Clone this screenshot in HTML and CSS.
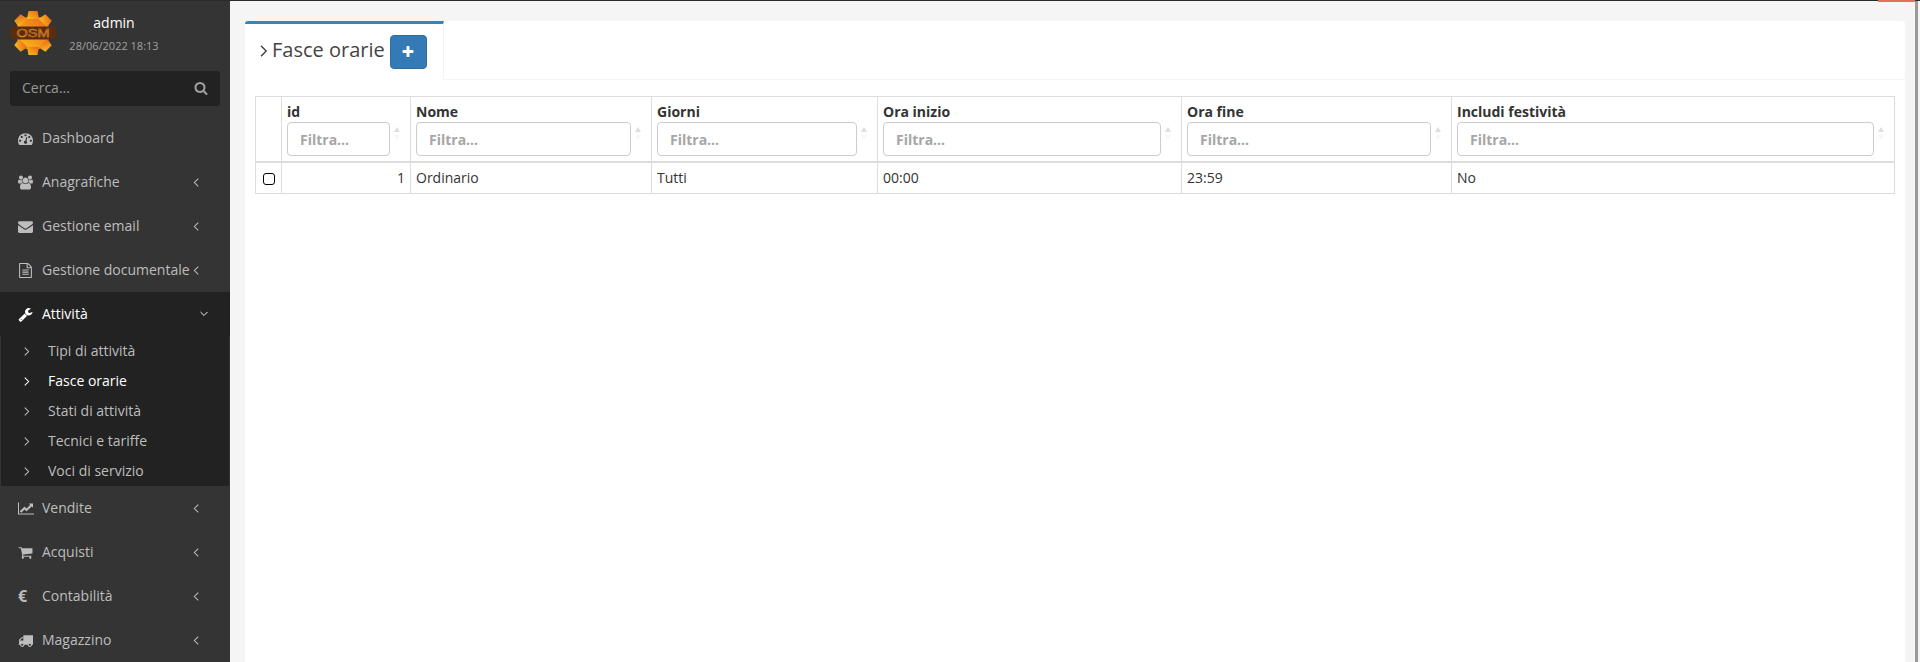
FILE: index.html
```html
<!DOCTYPE html>
<html lang="it">
<head>
<meta charset="utf-8">
<title>Fasce orarie</title>
<link rel="stylesheet" href="styles.css">
</head>
<body>
<svg class="defs" width="0" height="0" aria-hidden="true">
  <defs>
    <symbol id="i-search" viewBox="0 0 1792 1792"><path d="M1216 832q0-185-131.500-316.500t-316.500-131.500-316.500 131.500-131.500 316.500 131.500 316.500 316.500 131.500 316.500-131.500 131.500-316.500zm512 832q0 52-38 90t-90 38q-54 0-90-38l-343-342q-179 124-399 124-143 0-273.500-55.500t-225-150-150-225-55.500-273.500 55.500-273.500 150-225 225-150 273.500-55.500 273.500 55.500 225 150 150 225 55.500 273.500q0 220-124 399l343 343q37 37 37 90z"/></symbol>
    <symbol id="i-dash" viewBox="0 0 1792 1792"><path d="M384 1152q0-53-37.500-90.500t-90.500-37.500-90.500 37.500-37.500 90.500 37.500 90.500 90.500 37.500 90.500-37.500 37.500-90.500zm192-448q0-53-37.500-90.500t-90.500-37.500-90.500 37.500-37.500 90.500 37.500 90.500 90.500 37.500 90.500-37.500 37.500-90.500zm428 481l101-382q6-26-7.500-48.500t-38.500-29.500-48 6.500-30 39.500l-101 382q-60 5-107 43.500t-63 98.500q-20 77 20 146t117 89 146-20 89-117q16-60-6-117t-72-91zm660-33q0-53-37.500-90.500t-90.500-37.500-90.500 37.500-37.500 90.500 37.500 90.500 90.500 37.500 90.500-37.500 37.500-90.500zm-640-640q0-53-37.500-90.500t-90.500-37.500-90.500 37.500-37.500 90.500 37.500 90.500 90.500 37.500 90.500-37.500 37.500-90.500zm448 192q0-53-37.500-90.500t-90.500-37.500-90.500 37.500-37.500 90.500 37.500 90.500 90.500 37.500 90.500-37.500 37.500-90.500zm320 448q0 261-141 483-19 29-54 29h-1402q-35 0-54-29-141-221-141-483 0-182 71-348t191-286 286-191 348-71 348 71 286 191 191 286 71 348z"/></symbol>
    <symbol id="i-users" viewBox="0 0 1920 1792"><path d="M593 896q-162 5-265 128h-134q-82 0-138-40.500t-56-118.500q0-353 124-353 6 0 43.500 21t97.500 42.500 119 21.500q67 0 133-23-5 37-5 66 0 139 81 256zm1071 637q0 120-73 189.500t-194 69.500h-874q-121 0-194-69.500t-73-189.500q0-53 3.500-103.500t14-109 26.500-108.500 43-97.500 62-81 85.500-53.500 111.500-20q10 0 43 21.500t73 48 107 48 135 21.500 135-21.500 107-48 73-48 43-21.500q61 0 111.500 20t85.500 53.500 62 81 43 97.500 26.500 108.500 14 109 3.500 103.500zm-1024-1277q0 106-75 181t-181 75-181-75-75-181 75-181 181-75 181 75 75 181zm704 384q0 159-112.500 271.500t-271.500 112.500-271.500-112.500-112.500-271.500 112.500-271.500 271.500-112.500 271.500 112.500 112.500 271.500zm576 225q0 78-56 118.500t-138 40.500h-134q-103-123-265-128 81-117 81-256 0-29-5-66 66 23 133 23 59 0 119-21.500t97.500-42.500 43.500-21q124 0 124 353zm-128-609q0 106-75 181t-181 75-181-75-75-181 75-181 181-75 181 75 75 181z"/></symbol>
    <symbol id="i-mail" viewBox="0 0 1792 1792"><path d="M1792 710v794q0 66-47 113t-113 47h-1472q-66 0-113-47t-47-113v-794q44 49 101 87 362 246 497 345 57 42 92.500 65.500t94.500 48 110 24.500h2q51 0 110-24.500t94.500-48 92.500-65.500q170-123 498-345 57-39 100-87zm0-294q0 79-49 151t-122 123q-376 261-468 325-10 7-42.500 30.500t-54 38-52 32.500-57.500 27-50 9h-2q-23 0-50-9t-57.500-27-52-32.500-54-38-42.500-30.500q-91-64-262-182.500t-205-142.500q-62-42-117-115.500t-55-136.500q0-78 41.500-130t118.500-52h1472q65 0 112.500 47t47.500 113z"/></symbol>
    <symbol id="i-file" viewBox="0 0 1792 1792"><path d="M1596 380q28 28 48 76t20 88v1152q0 40-28 68t-68 28h-1344q-40 0-68-28t-28-68v-1600q0-40 28-68t68-28h896q40 0 88 20t76 48zm-444-244v376h376q-10-29-22-41l-313-313q-12-12-41-22zm384 1528v-1024h-416q-40 0-68-28t-28-68v-416h-768v1536h1280zm-1024-864q0-14 9-23t23-9h704q14 0 23 9t9 23v64q0 14-9 23t-23 9h-704q-14 0-23-9t-9-23v-64zm736 224q14 0 23 9t9 23v64q0 14-9 23t-23 9h-704q-14 0-23-9t-9-23v-64q0-14 9-23t23-9h704zm0 256q14 0 23 9t9 23v64q0 14-9 23t-23 9h-704q-14 0-23-9t-9-23v-64q0-14 9-23t23-9h704z"/></symbol>
    <symbol id="i-wrench" viewBox="0 0 1792 1792"><path d="M448 1472q0-26-19-45t-45-19-45 19-19 45 19 45 45 19 45-19 19-45zm644-420l-682 682q-37 37-90 37-52 0-91-37l-106-108q-38-36-38-90 0-53 38-91l681-681q39 98 114.500 173.500t173.500 114.500zm634-435q0 39-23 106-47 134-164.500 217.500t-258.500 83.500q-185 0-316.500-131.500t-131.500-316.500 131.500-316.500 316.500-131.500q58 0 121.500 16.500t107.500 46.500q16 11 16 28t-16 28l-293 169v224l193 107q5-3 79-48.500t135.500-81 70.500-35.500q15 0 23.500 10t8.500 25z"/></symbol>
    <symbol id="i-chart" viewBox="0 0 2048 1792"><path d="M2048 1536v128h-2048v-1536h128v1408h1920zm-128-1248v435q0 21-19.500 30.500t-35.500-7.500l-121-121-633 633q-10 10-23 10t-23-10l-233-233-416 416-192-192 585-585q10-10 23-10t23 10l233 233 464-464-121-121q-16-16-7.500-35.500t29.500-19.500h435q14 0 23 9t9 23z"/></symbol>
    <symbol id="i-cart" viewBox="0 0 1792 1792"><path d="M704 1536q0 52-38 90t-90 38-90-38-38-90 38-90 90-38 90 38 38 90zm896 0q0 52-38 90t-90 38-90-38-38-90 38-90 90-38 90 38 38 90zm128-1088v512q0 24-16.500 42.500t-40.500 21.500l-1044 122q13 60 13 70 0 16-24 64h920q26 0 45 19t19 45-19 45-45 19h-1024q-26 0-45-19t-19-45q0-11 8-31.500t16-36 21.500-40 15.500-29.500l-177-823h-204q-26 0-45-19t-19-45 19-45 45-19h256q16 0 28.500 6.500t19.500 15.500 13 24.500 8 26 5.500 29.500 4.500 26h1201q26 0 45 19t19 45z"/></symbol>
    <symbol id="i-truck" viewBox="0 0 1792 1792"><path d="M640 1408q0-52-38-90t-90-38-90 38-38 90 38 90 90 38 90-38 38-90zm-384-512h384v-256h-158q-13 0-22 9l-195 195q-9 9-9 22v30zm1280 512q0-52-38-90t-90-38-90 38-38 90 38 90 90 38 90-38 38-90zm256-1088v1024q0 15-4 26.500t-13.500 18.500-16.500 11.500-23.500 6-22.500 2-25.500 0-22.500-.5q0 106-75 181t-181 75-181-75-75-181h-384q0 106-75 181t-181 75-181-75-75-181h-64q-3 0-22.500.5t-25.500 0-22.500-2-23.500-6-16.500-11.500-13.500-18.500-4-26.500q0-26 19-45t45-19v-320q0-8-.5-35t0-38 2.500-34.500 6.500-37 14-30.500 22.500-30l198-198q19-19 50.500-32t58.500-13h160v-192q0-26 19-45t45-19h1024q26 0 45 19t19 45z"/></symbol>
    <symbol id="i-plus" viewBox="0 0 1792 1792"><path d="M1600 736v192q0 40-28 68t-68 28h-416v416q0 40-28 68t-68 28h-192q-40 0-68-28t-28-68v-416h-416q-40 0-68-28t-28-68v-192q0-40 28-68t68-28h416v-416q0-40 28-68t68-28h192q40 0 68 28t28 68v416h416q40 0 68 28t28 68z"/></symbol>
    <symbol id="i-left" viewBox="0 0 8 12"><path d="M7 .8 1.800 6 7 11.200" fill="none" stroke="currentColor" stroke-width="1.400"/></symbol>
    <symbol id="i-down" viewBox="0 0 12 8"><path d="M.8 1 6 6.200 11.200 1" fill="none" stroke="currentColor" stroke-width="1.400"/></symbol>
    <symbol id="i-right" viewBox="0 0 8 12"><path d="M1 .8 6.200 6 1 11.200" fill="none" stroke="currentColor" stroke-width="1.400"/></symbol>
    <linearGradient id="gear-fill" x1="0" y1="1" x2="1" y2="0">
      <stop offset="0" stop-color="#f9c114"/>
      <stop offset="1" stop-color="#ea6420"/>
    </linearGradient>
  </defs>
</svg>

<div class="topline"><span class="topline-alert"></span></div>
<div class="app">
  <aside class="sidebar">
    <div class="user-panel">
      <svg class="logo" viewBox="0 0 44 44" aria-hidden="true">
        <g fill="url(#gear-fill)">
          <circle cx="22" cy="22" r="17"/>
          <path d="M17.500 0h9l1.500 8h-12z"/>
          <path d="M17.500 44h9l1.500-8h-12z"/>
          <path d="M17.500 0h9l1.500 8h-12z" transform="rotate(45 22 22)"/>
          <path d="M17.500 44h9l1.500-8h-12z" transform="rotate(45 22 22)"/>
          <path d="M17.500 0h9l1.500 8h-12z" transform="rotate(-45 22 22)"/>
          <path d="M17.500 44h9l1.500-8h-12z" transform="rotate(-45 22 22)"/>
        </g>
        <rect x="-1" y="15.500" width="46" height="13" rx="4" fill="#5a2d10"/>
        <text x="22" y="26.200" class="logo-text" text-anchor="middle" textLength="33" lengthAdjust="spacingAndGlyphs">OSM</text>
      </svg>
      <div class="user-info">
        <div class="user-name">admin</div>
        <div class="user-date">28/06/2022 18:13</div>
      </div>
    </div>
    <form class="search">
      <input class="search-input" type="text" placeholder="Cerca...">
      <svg class="search-icon"><use href="#i-search"/></svg>
    </form>
    <nav class="menu">
      <a class="item"><svg class="ic"><use href="#i-dash"/></svg><span class="label">Dashboard</span></a>
      <a class="item"><svg class="ic"><use href="#i-users"/></svg><span class="label">Anagrafiche</span><svg class="caret"><use href="#i-left"/></svg></a>
      <a class="item"><svg class="ic"><use href="#i-mail"/></svg><span class="label">Gestione email</span><svg class="caret"><use href="#i-left"/></svg></a>
      <a class="item"><svg class="ic"><use href="#i-file"/></svg><span class="label">Gestione documentale</span><svg class="caret"><use href="#i-left"/></svg></a>
      <a class="item item-open"><svg class="ic"><use href="#i-wrench"/></svg><span class="label">Attività</span><svg class="caret-down"><use href="#i-down"/></svg></a>
      <div class="submenu">
        <a class="sub"><svg class="sub-caret"><use href="#i-right"/></svg><span>Tipi di attività</span></a>
        <a class="sub sub-active"><svg class="sub-caret"><use href="#i-right"/></svg><span>Fasce orarie</span></a>
        <a class="sub"><svg class="sub-caret"><use href="#i-right"/></svg><span>Stati di attività</span></a>
        <a class="sub"><svg class="sub-caret"><use href="#i-right"/></svg><span>Tecnici e tariffe</span></a>
        <a class="sub"><svg class="sub-caret"><use href="#i-right"/></svg><span>Voci di servizio</span></a>
      </div>
      <a class="item"><svg class="ic ic-chart"><use href="#i-chart"/></svg><span class="label">Vendite</span><svg class="caret"><use href="#i-left"/></svg></a>
      <a class="item"><svg class="ic"><use href="#i-cart"/></svg><span class="label">Acquisti</span><svg class="caret"><use href="#i-left"/></svg></a>
      <a class="item"><span class="ic ic-euro">€</span><span class="label">Contabilità</span><svg class="caret"><use href="#i-left"/></svg></a>
      <a class="item"><svg class="ic"><use href="#i-truck"/></svg><span class="label">Magazzino</span><svg class="caret"><use href="#i-left"/></svg></a>
    </nav>
  </aside>

  <main class="content">
    <section class="card">
      <header class="card-head">
        <div class="tab">
          <svg class="tab-caret"><use href="#i-right"/></svg>
          <h1 class="tab-title">Fasce orarie</h1>
          <button class="add-btn" type="button"><svg class="add-icon"><use href="#i-plus"/></svg></button>
        </div>
        <div class="tab-rest"></div>
      </header>
      <div class="card-body">
        <table class="grid">
          <colgroup>
            <col class="c-check"><col class="c-id"><col class="c-nome"><col class="c-giorni"><col class="c-inizio"><col class="c-fine"><col class="c-fest">
          </colgroup>
          <thead>
            <tr>
              <th></th>
              <th><div class="th-title">id</div><input class="filter" type="text" placeholder="Filtra..."><span class="sort"></span></th>
              <th><div class="th-title">Nome</div><input class="filter" type="text" placeholder="Filtra..."><span class="sort"></span></th>
              <th><div class="th-title">Giorni</div><input class="filter" type="text" placeholder="Filtra..."><span class="sort"></span></th>
              <th><div class="th-title">Ora inizio</div><input class="filter" type="text" placeholder="Filtra..."><span class="sort"></span></th>
              <th><div class="th-title">Ora fine</div><input class="filter" type="text" placeholder="Filtra..."><span class="sort"></span></th>
              <th><div class="th-title">Includi festività</div><input class="filter" type="text" placeholder="Filtra..."><span class="sort"></span></th>
            </tr>
          </thead>
          <tbody>
            <tr>
              <td class="td-check"><input class="row-check" type="checkbox"></td>
              <td class="td-num">1</td>
              <td>Ordinario</td>
              <td>Tutti</td>
              <td>00:00</td>
              <td>23:59</td>
              <td>No</td>
            </tr>
          </tbody>
        </table>
      </div>
    </section>
  </main>
  <div class="scrollbar"></div>
</div>
</body>
</html>
```
FILE: styles.css
```css
* { box-sizing: border-box; }
html, body { height: 100%; }
body {
  margin: 0;
  height: 662px;
  overflow: hidden;
  display: flex;
  flex-direction: column;
  background: #f5f5f5;
  color: #333;
  font-family: "Open Sans", "Liberation Sans", sans-serif;
  font-size: 14px;
  line-height: 20px;
}
.defs { position: absolute; }

.topline {
  flex: 0 0 1px;
  background: #2a2a2a;
  position: relative;
}
.topline-alert {
  position: absolute;
  top: 0;
  right: 5px;
  width: 37px;
  height: 2px;
  background: #e0705f;
}

.app { flex: 1; display: flex; min-height: 0; }

/* Sidebar */
.sidebar {
  flex: 0 0 230px;
  background: #343434;
  color: #bdbdbd;
  overflow: hidden;
}
.user-panel {
  height: 70px;
  display: flex;
  padding: 10px 0 0 11px;
}
.logo { width: 44px; height: 44px; flex: none; overflow: visible; }
.logo-text {
  font-family: "Liberation Sans", sans-serif;
  font-size: 10px;
  fill: none;
  stroke: #e8912a;
  stroke-width: 0.450px;
}
.user-info { width: 118px; text-align: center; padding-top: 2px; }
.user-name { color: #fff; font-size: 14px; line-height: 20px; }
.user-date { color: #a0a0a0; font-size: 11px; line-height: 20px; margin-top: 3px; }

.search {
  margin: 0 10px;
  height: 35px;
  background: #222;
  border-radius: 3px;
  display: flex;
  align-items: center;
  padding: 0 12px 1px;
}
.search-input {
  flex: 1;
  min-width: 0;
  border: 0;
  padding: 0;
  background: transparent;
  color: #999;
  font: inherit;
}
.search-input::placeholder { color: #999; opacity: 1; }
.search-icon { width: 14px; height: 14px; fill: #a0a0a0; flex: none; }

.menu { margin-top: 10px; }
.item {
  height: 44px;
  display: flex;
  align-items: center;
  padding-left: 18px;
  color: #bdbdbd;
}
.item-open { background: #222; color: #fff; }
.ic { width: 15px; height: 15px; fill: currentColor; flex: none; }
.ic-chart { width: 16px; margin-right: -1px; }
.ic-euro { font-weight: 700; line-height: 15px; font-size: 16px; }
.label { margin-left: 9px; width: 147px; white-space: nowrap; }
.caret { width: 6px; height: 9px; flex: none; margin-left: 4px; }
.caret-down { width: 8px; height: 6px; margin-left: 11px; flex: none; }
.submenu { background: #222; margin: 0 1px; }
.sub {
  height: 30px;
  display: flex;
  align-items: center;
  padding-left: 23px;
  color: #bdbdbd;
}
.sub-active { color: #fff; }
.sub-caret { width: 6px; height: 9px; margin-right: 18px; flex: none; }

/* Content */
.content { flex: 1; min-width: 0; padding: 20px 10px 0 15px; }
.card {
  height: 100%;
  background: #fff;
  border-radius: 3px 3px 0 0;
  overflow: hidden;
}
.card-head { display: flex; height: 59px; }
.tab {
  flex: 0 0 199px;
  border-top: 3px solid #3c83b5;
  border-right: 1px solid #f4f4f4;
  display: flex;
  align-items: flex-start;
  padding: 11px 0 0 15px;
}
.tab-caret { width: 8px; height: 12px; margin-top: 10px; flex: none; color: #444; }
.tab-title {
  margin: 0 0 0 4px;
  font-size: 20px;
  font-weight: 400;
  line-height: 30px;
  color: #444;
  white-space: nowrap;
}
.add-btn {
  width: 37px;
  height: 34px;
  margin-left: 5px;
  padding: 0;
  background: #337ab7;
  border: 1px solid #2e6da4;
  border-radius: 4px;
  display: flex;
  align-items: center;
  justify-content: center;
}
.add-icon { width: 14px; height: 14px; fill: #fff; }
.tab-rest { flex: 1; border-bottom: 1px solid #f4f4f4; }
.card-body { padding: 16px 10px 0; }

.grid {
  width: 1639px;
  table-layout: fixed;
  border-collapse: collapse;
  color: #333;
}
.c-check { width: 26px; }
.c-id { width: 129px; }
.c-nome { width: 241px; }
.c-giorni { width: 226px; }
.c-inizio { width: 304px; }
.c-fine { width: 270px; }
.c-fest { width: 443px; }
.grid th, .grid td { border: 1px solid #ddd; }
.grid th {
  position: relative;
  padding: 5px 20px 5px 5px;
  border-bottom: 2px solid #ddd;
  text-align: left;
  font-weight: 700;
}
.th-title { line-height: 20px; }
.filter {
  display: block;
  width: 100%;
  height: 34px;
  padding: 6px 12px;
  border: 1px solid #ccc;
  border-radius: 4px;
  background: #fff;
  font: inherit;
  font-weight: 700;
  color: #555;
}
.filter::placeholder { color: #a6a6a6; opacity: 1; }
.sort {
  position: absolute;
  right: 10px;
  top: 30px;
  width: 0;
  height: 0;
  border-left: 3.500px solid transparent;
  border-right: 3.500px solid transparent;
  border-bottom: 5px solid #dedede;
}
.sort::after {
  content: "";
  position: absolute;
  left: -3.500px;
  top: 8px;
  border-left: 3.500px solid transparent;
  border-right: 3.500px solid transparent;
  border-top: 5px solid #f6f6f6;
}
.grid td { padding: 5px; line-height: 19px; height: 31px; }
.td-check { padding: 5px 0 !important; text-align: center; }
.td-num { text-align: right; }
.row-check {
  appearance: none;
  display: block;
  width: 12px;
  height: 12px;
  margin: 3px auto 0 7px;
  border: 1.500px solid #000;
  border-radius: 3px;
  background: #fff;
}

.scrollbar { flex: 0 0 5px; border-left: 3px solid #9a9a9a; background: #f5f5f5; }
```
